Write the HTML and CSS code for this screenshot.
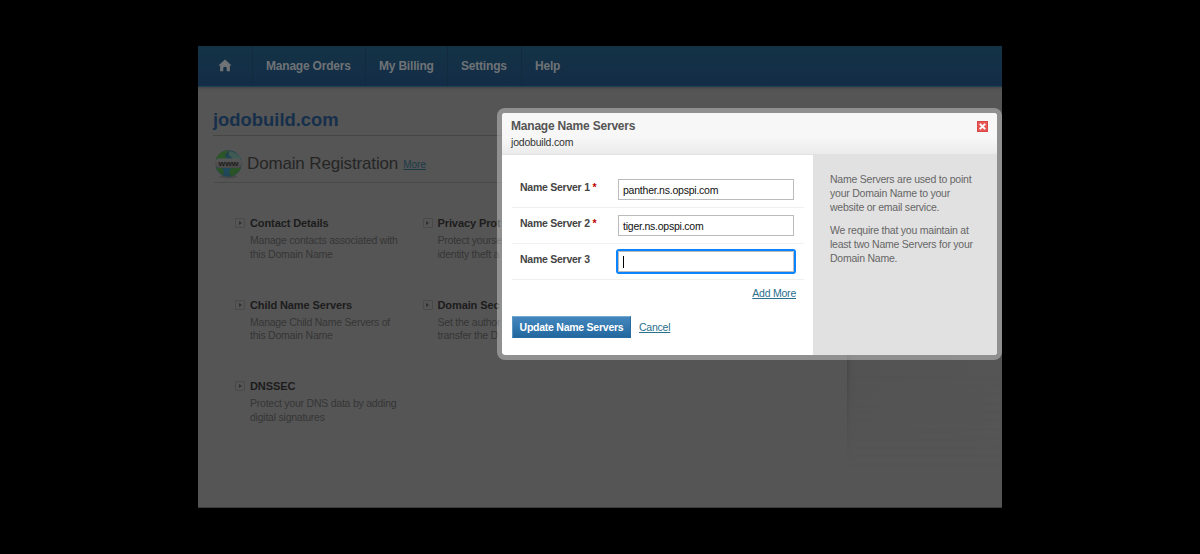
FILE: index.html
```html
<!DOCTYPE html>
<html lang="en">
<head>
    <meta charset="UTF-8">
    <meta name="viewport" content="width=device-width, initial-scale=1.0">
    <title>Manage Name Servers</title>
    <link rel="stylesheet" href="styles.css">
</head>
<body>
    <div class="page">
        <nav class="navbar">
            <a class="nav-item home" href="#">
                <svg width="14" height="13" viewBox="0 0 14 13">
                    <path d="M7 0.6 L13.6 6.6 H11.9 V12.2 H8.7 V8.4 Q7 7 5.3 8.4 V12.2 H2.1 V6.6 H0.4 Z"/>
                </svg>
            </a>
            <a class="nav-item orders" href="#">Manage Orders</a>
            <a class="nav-item billing" href="#">My Billing</a>
            <a class="nav-item settings" href="#">Settings</a>
            <a class="nav-item help" href="#">Help</a>
        </nav>

        <div class="content">
            <h1>jodobuild.com</h1>
            <div class="section-title">
                <svg class="globe" width="29" height="30" viewBox="0 0 29 30">
                    <defs>
                        <radialGradient id="sea" cx="45%" cy="60%" r="60%">
                            <stop offset="0" stop-color="#1e4c62"/>
                            <stop offset="1" stop-color="#23404c"/>
                        </radialGradient>
                        <linearGradient id="band" x1="0" y1="0" x2="0" y2="1">
                            <stop offset="0" stop-color="#585858"/>
                            <stop offset="1" stop-color="#484848"/>
                        </linearGradient>
                    </defs>
                    <ellipse cx="14.5" cy="27.5" rx="9" ry="1.8" fill="#484848"/>
                    <circle cx="14.5" cy="14.5" r="13.2" fill="url(#sea)"/>
                    <path d="M2 10 Q5 2 13 1.4 L15 3 L11 5 L12 10 Z" fill="#2c5628"/>
                    <path d="M15 2 Q24 3 27 10 H19 L15 6 Z" fill="#3f5a52"/>
                    <path d="M2 19 H8 L10 22 L9 26 Q4 23 2 19 Z" fill="#2a5328"/>
                    <path d="M17 19 H27 Q24 25 17 27.3 L15 23 Z" fill="#2a5328"/>
                    <rect x="0.5" y="9.5" width="28" height="9.6" rx="4.8" fill="url(#band)"/>
                    <text x="14.5" y="16.6" text-anchor="middle" textLength="20" lengthAdjust="spacingAndGlyphs">www</text>
                </svg>
                <h2>Domain Registration</h2>
                <a href="#">More</a>
            </div>

            <div class="features">
                <div class="feature">
                    <span class="arrow"></span>
                    <h3>Contact Details</h3>
                    <p>Manage contacts associated with<br>this Domain Name</p>
                </div>
                <div class="feature">
                    <span class="arrow"></span>
                    <h3>Privacy Prot</h3>
                    <p>Protect yourse<br>identity theft a</p>
                </div>
                <div class="feature">
                    <span class="arrow"></span>
                    <h3>Child Name Servers</h3>
                    <p>Manage Child Name Servers of<br>this Domain Name</p>
                </div>
                <div class="feature">
                    <span class="arrow"></span>
                    <h3>Domain Sec</h3>
                    <p>Set the author<br>transfer the D</p>
                </div>
                <div class="feature">
                    <span class="arrow"></span>
                    <h3>DNSSEC</h3>
                    <p>Protect your DNS data by adding<br>digital signatures</p>
                </div>
            </div>
        </div>
        <div class="sidebar-shadow"></div>

        <div class="modal">
            <div class="modal-header">
                <div>
                    <h4>Manage Name Servers</h4>
                    <p>jodobuild.com</p>
                </div>
                <svg class="close" width="11" height="11" viewBox="0 0 11 11">
                    <rect x="0.5" y="0.5" width="10" height="10" fill="#e65a57" stroke="#d94643"/>
                    <path d="M2.8 2.8 L8.2 8.2 M8.2 2.8 L2.8 8.2" stroke="#fff" stroke-width="1.9"/>
                </svg>
            </div>
            <div class="modal-body">
                <form class="servers">
                    <div class="row">
                        <label for="ns1">Name Server 1 <span>*</span></label>
                        <input type="text" id="ns1" value="panther.ns.opspi.com">
                    </div>
                    <div class="row">
                        <label for="ns2">Name Server 2 <span>*</span></label>
                        <input type="text" id="ns2" value="tiger.ns.opspi.com">
                    </div>
                    <div class="row">
                        <label for="ns3">Name Server 3</label>
                        <div class="input-focused"><span class="caret"></span></div>
                    </div>
                    <div class="add-more"><a href="#">Add More</a></div>
                    <div class="actions">
                        <button type="button" class="btn">Update Name Servers</button>
                        <a href="#">Cancel</a>
                    </div>
                </form>
                <div class="info">
                    <p>Name Servers are used to point<br>your Domain Name to your<br>website or email service.</p>
                    <p>We require that you maintain at<br>least two Name Servers for your<br>Domain Name.</p>
                </div>
            </div>
        </div>
    </div>
</body>
</html>
```
FILE: styles.css
```css
* {
    box-sizing: border-box;
}

body {
    margin: 0;
    padding: 46px 0 0 198px;
    height: 554px;
    background: #000;
    font-family: Arial, "Liberation Sans", sans-serif;
    overflow: hidden;
}

h1, h2, h3, h4, p {
    margin: 0;
}

.page {
    position: relative;
    width: 804px;
    height: 462px;
    background: #555;
    border-bottom: 1px solid #3c3c3c;
}

/* top navigation */
.navbar {
    display: flex;
    height: 41px;
    background: linear-gradient(#133345, #142c47);
    border-bottom: 1px solid #1d4055;
    box-shadow: 0 1px 3px rgba(0, 0, 0, 0.25);
}

.nav-item {
    display: flex;
    align-items: center;
    padding-left: 13px;
    border-right: 1px solid #112a3d;
    color: #6f7376;
    font-size: 12px;
    letter-spacing: -0.2px;
    font-weight: bold;
    text-decoration: none;
    white-space: nowrap;
}

.home {
    width: 55px;
    padding-left: 20px;
}

.home svg {
    fill: #6f7376;
    margin-bottom: 2px;
}

.orders {
    width: 113px;
}

.billing {
    width: 82px;
}

.settings {
    width: 74px;
}

.help {
    border-right: none;
}

/* page content */
.content {
    padding: 20px 0 0 16px;
    width: 649px;
}

h1 {
    height: 29px;
    line-height: 25px;
    margin-left: -1px;
    border-bottom: 1px solid #464646;
    color: #162f4b;
    font-size: 18.4px;
}

.section-title {
    display: flex;
    align-items: center;
    height: 47px;
    border-bottom: 1px solid #494949;
    padding-top: 9px;
}

.section-title h2 {
    margin: 0 5px 0 4px;
    color: #252525;
    font-size: 17px;
    letter-spacing: -0.15px;
    font-weight: normal;
}

.section-title a {
    margin-top: 2px;
    color: #1c3b48;
    font-size: 10px;
}

.globe text {
    font: bold 8px Arial, "Liberation Sans", sans-serif;
    fill: #1c1c1c;
}

.features {
    display: grid;
    grid-template-columns: 187.5px 80px;
    grid-auto-rows: 81.5px;
    padding: 32px 0 0 21px;
}

.feature {
    display: grid;
    grid-template-columns: 15px 1fr;
    align-content: start;
}

.feature h3 {
    color: #1c1c1c;
    font-size: 11px;
    letter-spacing: -0.1px;
    line-height: 16px;
    white-space: nowrap;
}

.feature p {
    grid-column: 2;
    margin-top: 3px;
    color: #363636;
    font-size: 10.5px;
    letter-spacing: -0.23px;
    line-height: 13.7px;
    white-space: nowrap;
}

.arrow {
    display: flex;
    align-items: center;
    justify-content: center;
    width: 10px;
    height: 10px;
    margin-top: 3px;
    border: 1px solid #494949;
    border-radius: 1px;
}

.arrow::after {
    content: "";
    border: 2.5px solid transparent;
    border-left: 3px solid #303030;
    border-right: none;
}

.sidebar-shadow {
    position: absolute;
    left: 649px;
    top: 300px;
    width: 155px;
    height: 120px;
    background: linear-gradient(90deg, #474747 0, #505050 3px, #535353 10px, #555 100%);
    -webkit-mask-image: linear-gradient(#000 20%, transparent);
    mask-image: linear-gradient(#000 20%, transparent);
}

/* dialog */
.modal {
    position: absolute;
    left: 299px;
    top: 62px;
    width: 505px;
    height: 252px;
    border: 5px solid rgba(255, 255, 255, 0.35);
    border-radius: 8px;
    background: #fff;
    background-clip: padding-box;
}

.modal-header {
    display: flex;
    justify-content: space-between;
    height: 42px;
    padding: 7px 9px 0 9px;
    border-bottom: 1px solid #e2e2e2;
    border-radius: 3px 3px 0 0;
    background: linear-gradient(#f7f7f7 60%, #ebebeb);
}

.modal-header h4 {
    color: #555;
    font-size: 12px;
    letter-spacing: -0.2px;
    line-height: 13px;
}

.modal-header p {
    margin-top: 2px;
    color: #333;
    font-size: 10.5px;
    letter-spacing: -0.2px;
    line-height: 14px;
}

.close {
    margin-top: 1px;
}

.modal-body {
    display: flex;
    height: 200px;
}

.servers {
    width: 311px;
    padding: 17px 9px 0 10px;
}

.row {
    display: flex;
    height: 36px;
    padding: 7px 9px 0 8px;
    border-bottom: 1px solid #f0f0f0;
}

.row label {
    width: 98px;
    color: #444;
    font-size: 10.5px;
    letter-spacing: -0.25px;
    font-weight: bold;
    line-height: 17px;
}

.row label span {
    color: #b00;
}

.row input,
.input-focused {
    width: 176px;
    height: 21px;
    padding: 0 4px;
    border: 1px solid #bbb;
    background: #fff;
    color: #111;
    font: 10.5px Arial, "Liberation Sans", sans-serif;
    letter-spacing: -0.23px;
}

.input-focused {
    outline: 2px solid #0a84ff;
    border-radius: 1px;
    padding-top: 4px;
}

.caret {
    display: block;
    width: 1px;
    height: 12px;
    background: #000;
}

.add-more {
    height: 36px;
    padding: 6px 8px 0 0;
    font-size: 10px;
    line-height: 14px;
    text-align: right;
}

.servers a {
    color: #2a6f8d;
    font-size: 10.5px;
    letter-spacing: -0.23px;
}

.actions {
    display: flex;
    align-items: center;
    gap: 8px;
}

.btn {
    width: 119px;
    height: 22px;
    padding: 0 0 1px;
    border: 1px solid #2a6a9e;
    border-top-color: #78a9cf;
    border-left-color: #5b95c2;
    background: linear-gradient(#4487bf, #22689e);
    color: #fff;
    font: bold 10.5px Arial, "Liberation Sans", sans-serif;
    letter-spacing: -0.25px;
    white-space: nowrap;
}

.info {
    flex: 1;
    padding: 17px 0 0 17px;
    border-radius: 0 0 3px 0;
    background: #e1e1e1;
    color: #666;
    font-size: 10.5px;
    letter-spacing: -0.23px;
    line-height: 14px;
}

.info p {
    margin-bottom: 9px;
    white-space: nowrap;
}
```
